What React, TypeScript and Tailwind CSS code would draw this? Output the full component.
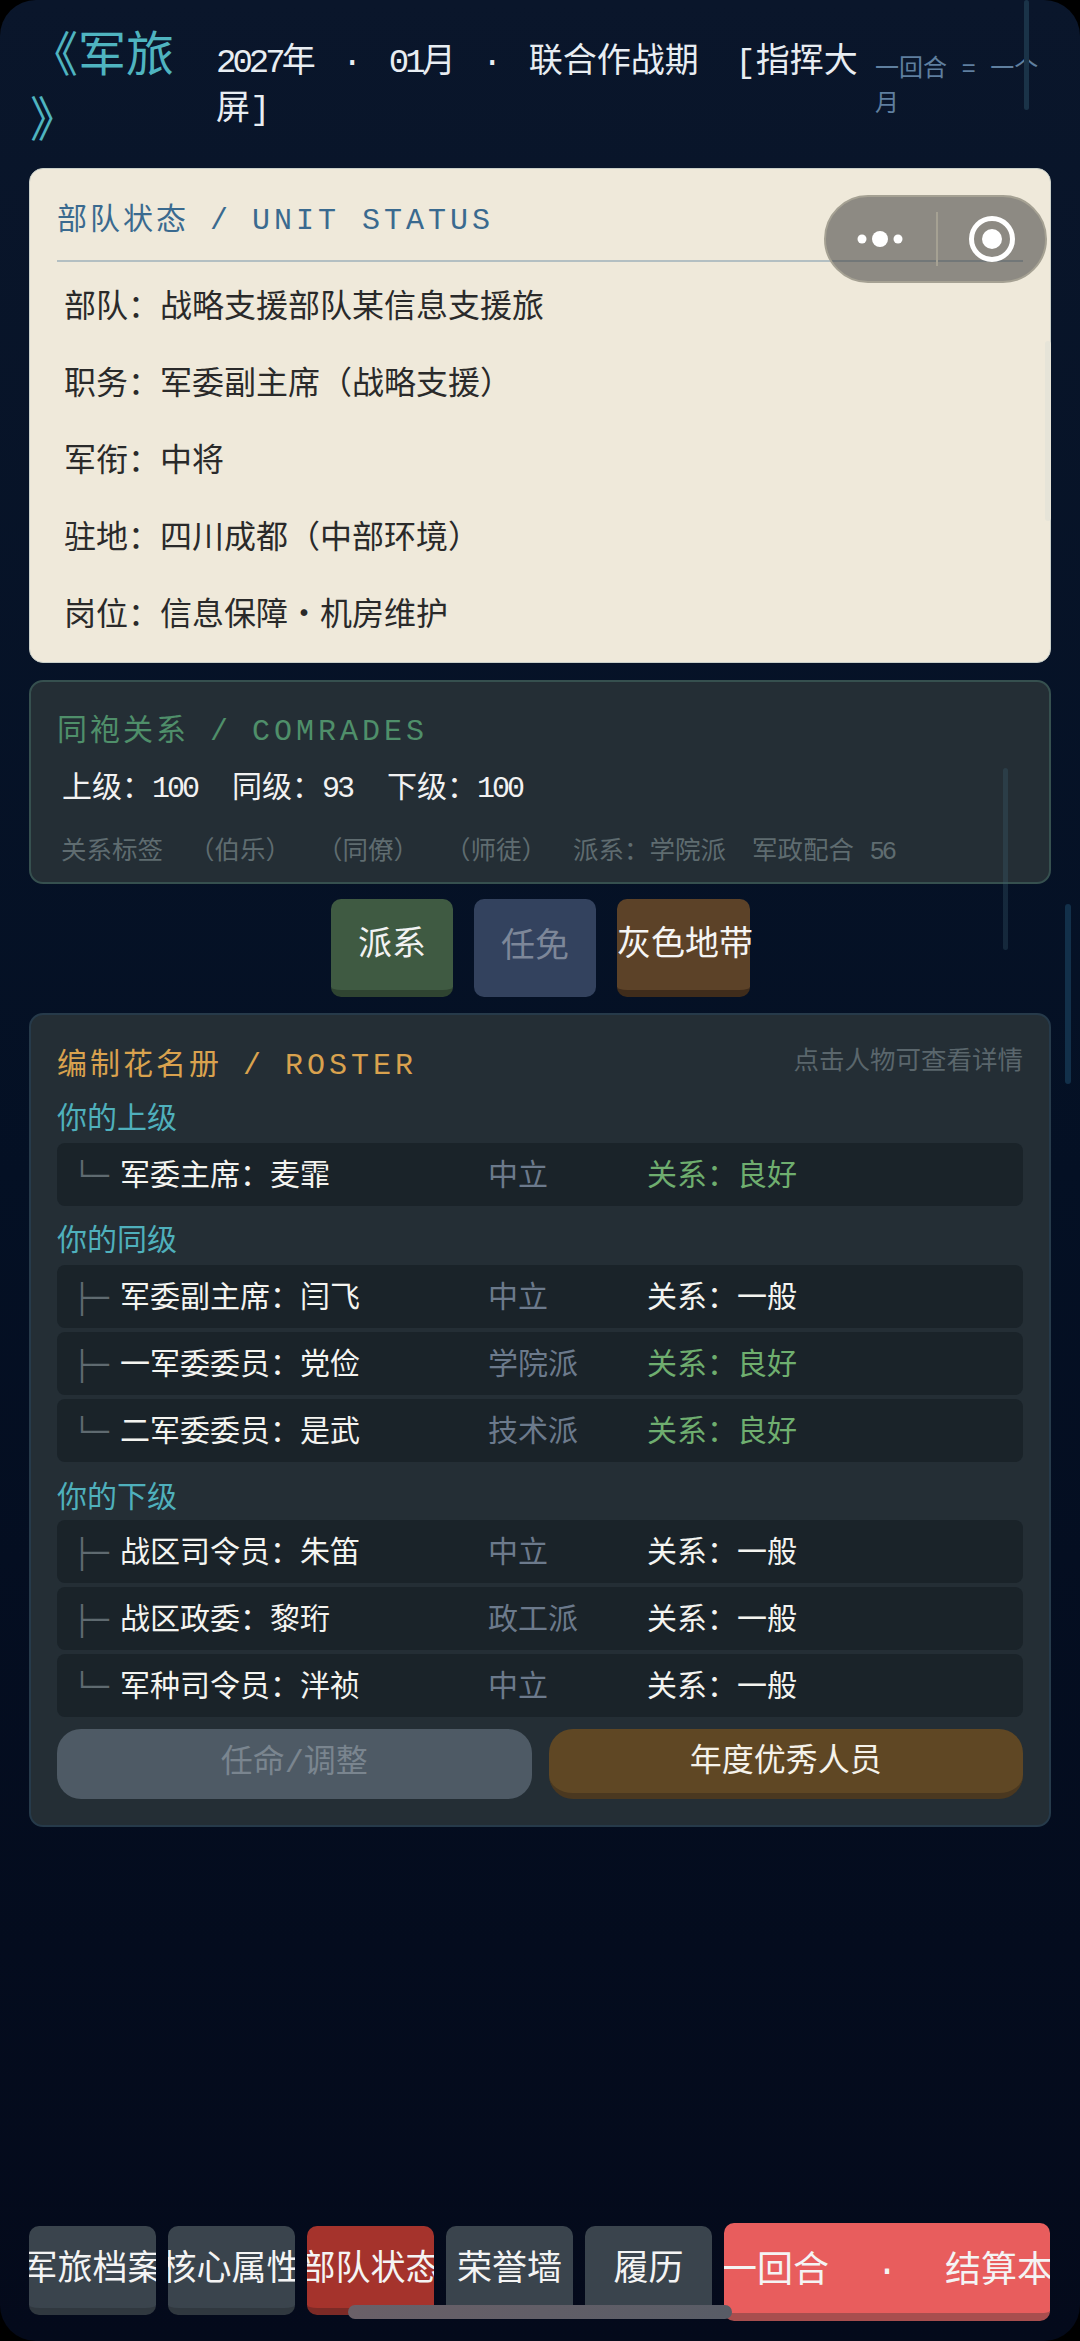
const font = "font-['Liberation_Mono','Noto_Sans_CJK_SC',monospace]";

const unitRows = [
  '部队：战略支援部队某信息支援旅',
  '职务：军委副主席（战略支援）',
  '军衔：中将',
  '驻地：四川成都（中部环境）',
  '岗位：信息保障・机房维护',
];

const rosterGroups = [
  {
    label: '你的上级',
    mt: 'mt-[18px]',
    rowsMt: 'mt-[5px]',
    rows: [{ tree: '└─', name: '军委主席：麦霏', faction: '中立', rel: '关系：良好', good: true }],
  },
  {
    label: '你的同级',
    mt: 'mt-[18px]',
    rowsMt: 'mt-[5px]',
    rows: [
      { tree: '├─', name: '军委副主席：闫飞', faction: '中立', rel: '关系：一般', good: false },
      { tree: '├─', name: '一军委委员：党俭', faction: '学院派', rel: '关系：良好', good: true },
      { tree: '└─', name: '二军委委员：是武', faction: '技术派', rel: '关系：良好', good: true },
    ],
  },
  {
    label: '你的下级',
    mt: 'mt-[19px]',
    rowsMt: 'mt-[3px]',
    rows: [
      { tree: '├─', name: '战区司令员：朱笛', faction: '中立', rel: '关系：一般', good: false },
      { tree: '├─', name: '战区政委：黎珩', faction: '政工派', rel: '关系：一般', good: false },
      { tree: '└─', name: '军种司令员：泮祯', faction: '中立', rel: '关系：一般', good: false },
    ],
  },
];

const tabs = [
  { text: '军旅档案', cls: 'bg-[#3a444d] border-[#30383f]' },
  { text: '核心属性', cls: 'bg-[#3a444d] border-[#30383f]' },
  { text: '部队状态', cls: 'bg-[#a5332c] border-[#7c2a26]' },
  { text: '荣誉墙', cls: 'bg-[#3a444d] border-[#30383f]' },
  { text: '履历', cls: 'bg-[#3a444d] border-[#30383f]' },
];

function Digits({ children }: { children: string }) {
  return <span className="tracking-[-3px]">{children}</span>;
}

export default function App() {
  return (
    <div className={`relative h-[2341px] w-[1080px] overflow-hidden bg-black ${font}`}>
      <div className="flex h-full flex-col rounded-[36px] bg-gradient-to-b from-[#0a162b] via-[#041024] to-[#040a1b] px-[29px]">
        {/* Header */}
        <header className="flex h-[168px] shrink-0 items-start">
          <h1 className="ml-[1px] mt-[26px] w-[186px] shrink-0 text-[48px] font-normal leading-[65px] text-[#4fb4c0]">
            《军旅
            <br />》
          </h1>
          <p className="mt-[40px] w-[659px] shrink-0 text-[34px] leading-[47px] text-[#e8edf2] [word-spacing:6px]">
            <span className="tracking-[-4px]">2027</span>年 · <span className="tracking-[-4px]">01</span>月 · 联合作战期 <span className="ml-[10px]">[指挥大</span>
            <br />
            屏]
          </p>
          <p className="mt-[52px] w-[170px] text-[24px] leading-[35px] text-[#5f7f9f]">
            一回合 = 一个
            <br />
            月
          </p>
        </header>

        {/* Unit status */}
        <section className="h-[495px] shrink-0 rounded-[14px] border border-[#c9cfc9] bg-[#efe9da] px-[27px] pt-[34px]">
          <h2 className="border-b-2 border-[#b3bfc2] pb-[21px] text-[30px] font-normal leading-[36px] tracking-[3px] text-[#3a6a8f]">
            部队状态 / <span className="tracking-[4px]">UNIT STATUS</span>
          </h2>
          <ul className="mt-[8px] pl-[7px] text-[32px] text-[#2a2a2a]">
            {unitRows.map((row) => (
              <li key={row} className="flex h-[77px] items-center">
                {row}
              </li>
            ))}
          </ul>
        </section>

        {/* Comrades */}
        <section className="mt-[17px] h-[204px] shrink-0 rounded-[14px] border-2 border-[#36504f] bg-[#242e35] px-[26px] pt-[32px]">
          <h2 className="text-[30px] font-normal leading-[36px] tracking-[3px] text-[#4f8f6a]">
            同袍关系 / <span className="tracking-[4px]">COMRADES</span>
          </h2>
          <div className="ml-[5px] mt-[19px] flex gap-[35px] text-[30px] leading-[40px] text-[#f2f2f2]">
            <span>上级：<Digits>100</Digits></span>
            <span>同级：<Digits>93</Digits></span>
            <span>下级：<Digits>100</Digits></span>
          </div>
          <div className="ml-[4px] mt-[27px] flex gap-[26px] whitespace-nowrap text-[25.5px] leading-[34px] text-[#5f6c70]">
            <span>关系标签</span>
            <span>（伯乐）</span>
            <span>（同僚）</span>
            <span>（师徒）</span>
            <span>派系：学院派</span>
            <span>军政配合 <Digits>56</Digits></span>
          </div>
        </section>

        {/* Sub tabs */}
        <div className="mt-[15px] flex h-[98px] shrink-0 justify-center gap-[21px] pl-[1px] text-[34px]">
          <button className="w-[122px] rounded-[10px] border-b-[7px] border-[#2f4431] bg-[#3f5a42] pt-[4px] text-[#f2f2f2]">派系</button>
          <button className="w-[122px] rounded-[10px] bg-[#33425e] pt-[1px] text-[#7d8799]">任免</button>
          <button className="w-[133px] whitespace-nowrap rounded-[10px] border-b-[7px] border-[#3f2c1b] bg-[#5c4228] pt-[4px] text-[#f5f5f5]">
            灰色地带
          </button>
        </div>

        {/* Roster */}
        <section className="mt-[16px] h-[814px] shrink-0 rounded-[14px] border-2 border-[#263a4a] bg-[#242e35] px-[26px] pt-[33px]">
          <div className="flex items-start justify-between">
            <h2 className="text-[30px] font-normal leading-[36px] tracking-[3px] text-[#d9a24e]">
              编制花名册 / <span className="tracking-[4px]">ROSTER</span>
            </h2>
            <span className="text-[25.5px] leading-[30px] text-[#5a666c]">点击人物可查看详情</span>
          </div>
          {rosterGroups.map((group) => (
            <div key={group.label}>
              <h3 className={`${group.mt} text-[30px] font-normal leading-[36px] text-[#4fb0bc]`}>{group.label}</h3>
              <div className={`${group.rowsMt} flex flex-col gap-[4px]`}>
                {group.rows.map((row) => (
                  <div
                    key={row.name}
                    className="grid h-[63px] grid-cols-[40px_368px_159px_1fr] items-center rounded-[8px] bg-[#1a2329] pl-[23px] pt-[5px] text-[30px]"
                  >
                    <span className="-ml-[7px] text-[#5f6a70]">{row.tree}</span>
                    <span className="whitespace-nowrap text-[#f4f4f0]">{row.name}</span>
                    <span className="text-[#6c7a8c]">{row.faction}</span>
                    <span className={row.good ? 'text-[#6fae6f]' : 'text-[#f4f4f0]'}>{row.rel}</span>
                  </div>
                ))}
              </div>
            </div>
          ))}
          <div className="mt-[12px] grid grid-cols-2 gap-[17px] text-[32px]">
            <button className="h-[70px] rounded-[24px] bg-[#4e5a65] text-[#7a858f]">任命/调整</button>
            <button className="h-[70px] rounded-[24px] border-b-[6px] border-[#4a3820] bg-[#5f4724] pt-[4px] text-[#f5f2ea]">年度优秀人员</button>
          </div>
        </section>

        {/* Bottom bar */}
        <nav className="mt-[396px] flex h-[98px] shrink-0 items-start gap-[12px] whitespace-nowrap text-[35px] text-[#f4f4f4]">
          {tabs.map((tab) => (
            <button
              key={tab.text}
              className={`mt-[3px] flex h-[89px] w-[127px] shrink-0 items-center justify-center overflow-hidden rounded-[10px] border-b-[7px] pt-[9px] ${tab.cls}`}
            >
              <span className="shrink-0">{tab.text}</span>
            </button>
          ))}
          <button className="flex h-[98px] w-[326px] shrink-0 items-center justify-center overflow-hidden rounded-[10px] border-b-[8px] border-[#a84e4e] bg-[#e85d5d] pt-[9px] text-[36px]">
            <span className="shrink-0 whitespace-pre [word-spacing:2px]">下一回合  ·  结算本月</span>
          </button>
        </nav>
      </div>

      {/* Scroll bars left by the page */}
      <div className="absolute left-[1024px] top-0 h-[110px] w-[5px] rounded-full bg-[#1a3348]" />
      <div className="absolute left-[1045px] top-[341px] h-[180px] w-[6px] rounded-full bg-[#e6e4d8]" />
      <div className="absolute left-[1003px] top-[768px] h-[182px] w-[5px] rounded-full bg-[#3a6070]/30" />
      <div className="absolute left-[1065px] top-[904px] h-[180px] w-[6px] rounded-full bg-[#12304a]" />

      {/* Mini program capsule */}
      <div className="absolute left-[824px] top-[195px] flex h-[88px] w-[223px] items-center rounded-full border-2 border-[#a5a193] bg-[#3c3c3c]/55">
        <svg width="110" height="84" viewBox="0 0 110 84" className="shrink-0">
          <circle cx="36" cy="42" r="4.5" fill="#fff" />
          <circle cx="54" cy="42" r="8" fill="#fff" />
          <circle cx="72" cy="42" r="4.5" fill="#fff" />
        </svg>
        <div className="h-[54px] w-[2px] shrink-0 bg-[#a5a193]" />
        <svg width="107" height="84" viewBox="0 0 107 84" className="shrink-0">
          <circle cx="54" cy="42" r="20.5" fill="none" stroke="#fff" strokeWidth="5" />
          <circle cx="54" cy="42" r="10" fill="#fff" />
        </svg>
      </div>

      {/* Home indicator */}
      <div className="absolute left-[348px] top-[2305px] h-[14px] w-[384px] rounded-full bg-gradient-to-r from-[#6a6068] to-[#585c66]" />
    </div>
  );
}
